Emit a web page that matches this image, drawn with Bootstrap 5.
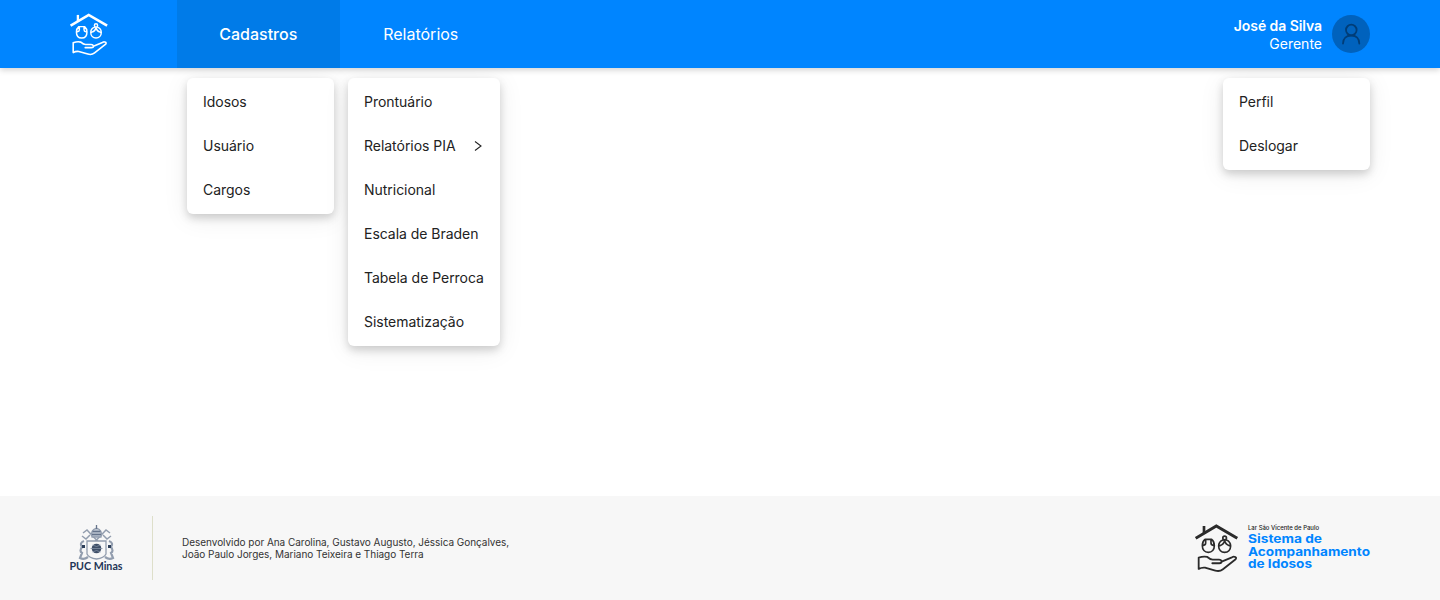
<!DOCTYPE html>
<html lang="pt-BR">
<head>
<meta charset="utf-8">
<meta name="viewport" content="width=device-width, initial-scale=1">
<title>Sistema de Acompanhamento de Idosos</title>
<link href="https://cdn.jsdelivr.net/npm/bootstrap@5.3.0/dist/css/bootstrap.min.css" rel="stylesheet">
<style>
body{font-family:Inter,"Liberation Sans",sans-serif;color:#222;background:#fff}
.topbar{height:68px;padding:0 70px;background:#0085ff;box-shadow:0 2px 6px rgba(0,0,0,.18);z-index:1}
.brand-mark{width:37px;margin-right:70px}
.main-link{width:162.5px;height:68px;font-size:16px;color:#fff;text-decoration:none}
.main-link.active{background:#007be8;font-weight:500}
.who{font-size:14px;line-height:18px;color:#fff;padding-top:2px;margin-right:10px}
.who .fw-semibold{letter-spacing:-.07px}
.avatar{width:38px;height:38px;background:#0062bd}
.drop{background:#fff;border-radius:6px;padding:1px 0 3px;box-shadow:0 4px 8px rgba(0,0,0,.17),0 4px 26px rgba(0,0,0,.08)}
.drop a{height:44px;padding:0 16px;font-size:14px;letter-spacing:-.03px;color:#222;text-decoration:none;white-space:nowrap}
.menus{padding:10px 70px 0 187px}
.drop-sm{width:147px}
.drop-lg{width:152px;margin-left:14px}
.foot{height:104px;padding:0 70px 0 68px;background:#f7f7f7}
.rule{width:1px;height:64px;background:#dedfca;margin:0 29px 0 28px}
.credits{font-size:10px;line-height:12px;letter-spacing:-.035px;color:#333}
</style>
</head>
<body>
<svg class="d-none" xmlns="http://www.w3.org/2000/svg">
  <symbol id="home-care" viewBox="0 0 130 146">
    <g fill="none" stroke="currentColor" stroke-linejoin="round" stroke-linecap="round">
      <path stroke-width="9" stroke-linecap="butt" stroke-linejoin="miter" d="M2 43 64 6l63 37"/>
      <path stroke-width="8" stroke-linecap="butt" d="M27 30V6"/>
      <g stroke-width="5">
        <path d="M30 46H50Q58 52 58 65C58 77 51 85 40 85S22 77 22 65Q22 52 30 46ZM32 47v10q0 6-7 7M48 47v10q0 6 7 7"/>
        <circle cx="89" cy="42" r="5.500"/>
        <path d="M84 48Q71 53 71 66C71 78 79 85 89 85S107 78 107 66Q107 53 94 48M89 50Q86 62 75 65M89 50Q92 62 103 65"/>
        <path stroke-width="5.500" d="M11 101v34q8-5 19-4l31 9q13 4 23-4l38-30q4-5-2-7-4-2-9 1l-31 13M11 101q15-5 26-2 9 8 16 8h19q7 0 8 6 0 5-7 5H52"/>
      </g>
    </g>
  </symbol>
</svg>
<div class="d-flex flex-column vh-100">
  <header class="topbar d-flex align-items-center position-relative flex-shrink-0">
    <a href="#" class="brand-mark text-white d-flex"><svg class="flex-shrink-0" width="38" height="43"><use href="#home-care"/></svg></a>
    <nav class="d-flex">
      <a href="#" class="main-link active d-flex align-items-center justify-content-center">Cadastros</a>
      <a href="#" class="main-link d-flex align-items-center justify-content-center">Relatórios</a>
    </nav>
    <div class="who ms-auto text-end"><div class="fw-semibold">José da Silva</div><div>Gerente</div></div>
    <div class="avatar rounded-circle d-flex align-items-center justify-content-center">
      <svg width="20" height="22" viewBox="0 0 20 22" fill="none" stroke="#003d77" stroke-width="1.800" stroke-linecap="round"><circle cx="10.300" cy="7" r="5.300"/><path d="M2 20.500c0-5 3.400-8 8.300-8s8 3 8 8"/></svg>
    </div>
  </header>
  <main class="menus d-flex align-items-start flex-grow-1">
    <div class="drop drop-sm">
      <a href="#" class="d-flex align-items-center">Idosos</a>
      <a href="#" class="d-flex align-items-center">Usuário</a>
      <a href="#" class="d-flex align-items-center">Cargos</a>
    </div>
    <div class="drop drop-lg">
      <a href="#" class="d-flex align-items-center">Prontuário</a>
      <a href="#" class="d-flex align-items-center justify-content-between">Relatórios PIA
        <svg width="11" height="14" viewBox="0 0 11 14" fill="none" stroke="#222" stroke-width="1.100"><path d="M2 3.500 8 8l-6 4.500"/></svg></a>
      <a href="#" class="d-flex align-items-center">Nutricional</a>
      <a href="#" class="d-flex align-items-center">Escala de Braden</a>
      <a href="#" class="d-flex align-items-center">Tabela de Perroca</a>
      <a href="#" class="d-flex align-items-center">Sistematização</a>
    </div>
    <div class="drop drop-sm ms-auto">
      <a href="#" class="d-flex align-items-center">Perfil</a>
      <a href="#" class="d-flex align-items-center">Deslogar</a>
    </div>
  </main>
  <footer class="foot d-flex align-items-center flex-shrink-0">
    <svg width="56" height="54" viewBox="-2 -2 56 54">
      <g fill="none" stroke="#929dae" stroke-width="1.300">
        <path d="M13 10l4-3 19 20M40 10l-4-3-19 20M12 13l4 3 4-4M41 13l-4 3-4-4" stroke-width="1.500"/>
        <path d="M14 18q-5 2-2 6-3 4 0 6l-2 5q4 2 8-1M39 18q5 2 2 6 3 4 0 6l2 5q-4 2-8-1" stroke-width="2.200"/>
        <path d="M22 14q-2-7 4.500-9 6.500 2 4.500 9z" fill="#bcc4d0"/>
        <path d="M22.500 8.500h8M22 11.500h9M26.500 2v4" stroke="#66748b"/>
        <path d="M17 18h19v13q-2 4-9.500 5Q19 35 17 31z" fill="#f7f7f7"/>
      </g>
      <path d="M12 22h3v3h-3zM38 22h3v3h-3z" fill="#2c3e58"/>
      <circle cx="26.500" cy="25.500" r="4.800" fill="#3f4f68"/>
      <path d="M20.500 25.500h12M22.500 22q4 3 8 0M22.500 29q4-3 8 0" stroke="#8290a5" stroke-width=".8" fill="none"/>
      <text x="-.5" y="47" font-family="Lato,sans-serif" font-weight="700" font-size="11.500" textLength="53" lengthAdjust="spacingAndGlyphs" fill="#1f3556">PUC Minas</text>
    </svg>
    <div class="rule"></div>
    <div class="credits">Desenvolvido por Ana Carolina, Gustavo Augusto, Jéssica Gonçalves,<br>João Paulo Jorges, Mariano Teixeira e Thiago Terra</div>
    <svg class="ms-auto" width="176" height="49" viewBox="0 0 176 49" style="margin-right:-1px" font-family="Inter,sans-serif">
      <use href="#home-care" x="0" y="0" width="43.300" height="48.600" color="#2b2b2b"/>
      <text x="53" y="6" font-size="5.600" font-weight="500" fill="#222" textLength="71" lengthAdjust="spacingAndGlyphs">Lar São Vicente de Paulo</text>
      <g font-size="12" font-weight="700" fill="#0085ff">
        <text x="53" y="19" textLength="74" lengthAdjust="spacingAndGlyphs">Sistema de</text>
        <text x="53" y="31.500" textLength="122" lengthAdjust="spacingAndGlyphs">Acompanhamento</text>
        <text x="53" y="44" textLength="64" lengthAdjust="spacingAndGlyphs">de Idosos</text>
      </g>
    </svg>
  </footer>
</div>
<script src="https://cdn.jsdelivr.net/npm/bootstrap@5.3.0/dist/js/bootstrap.bundle.min.js"></script>
</body>
</html>
